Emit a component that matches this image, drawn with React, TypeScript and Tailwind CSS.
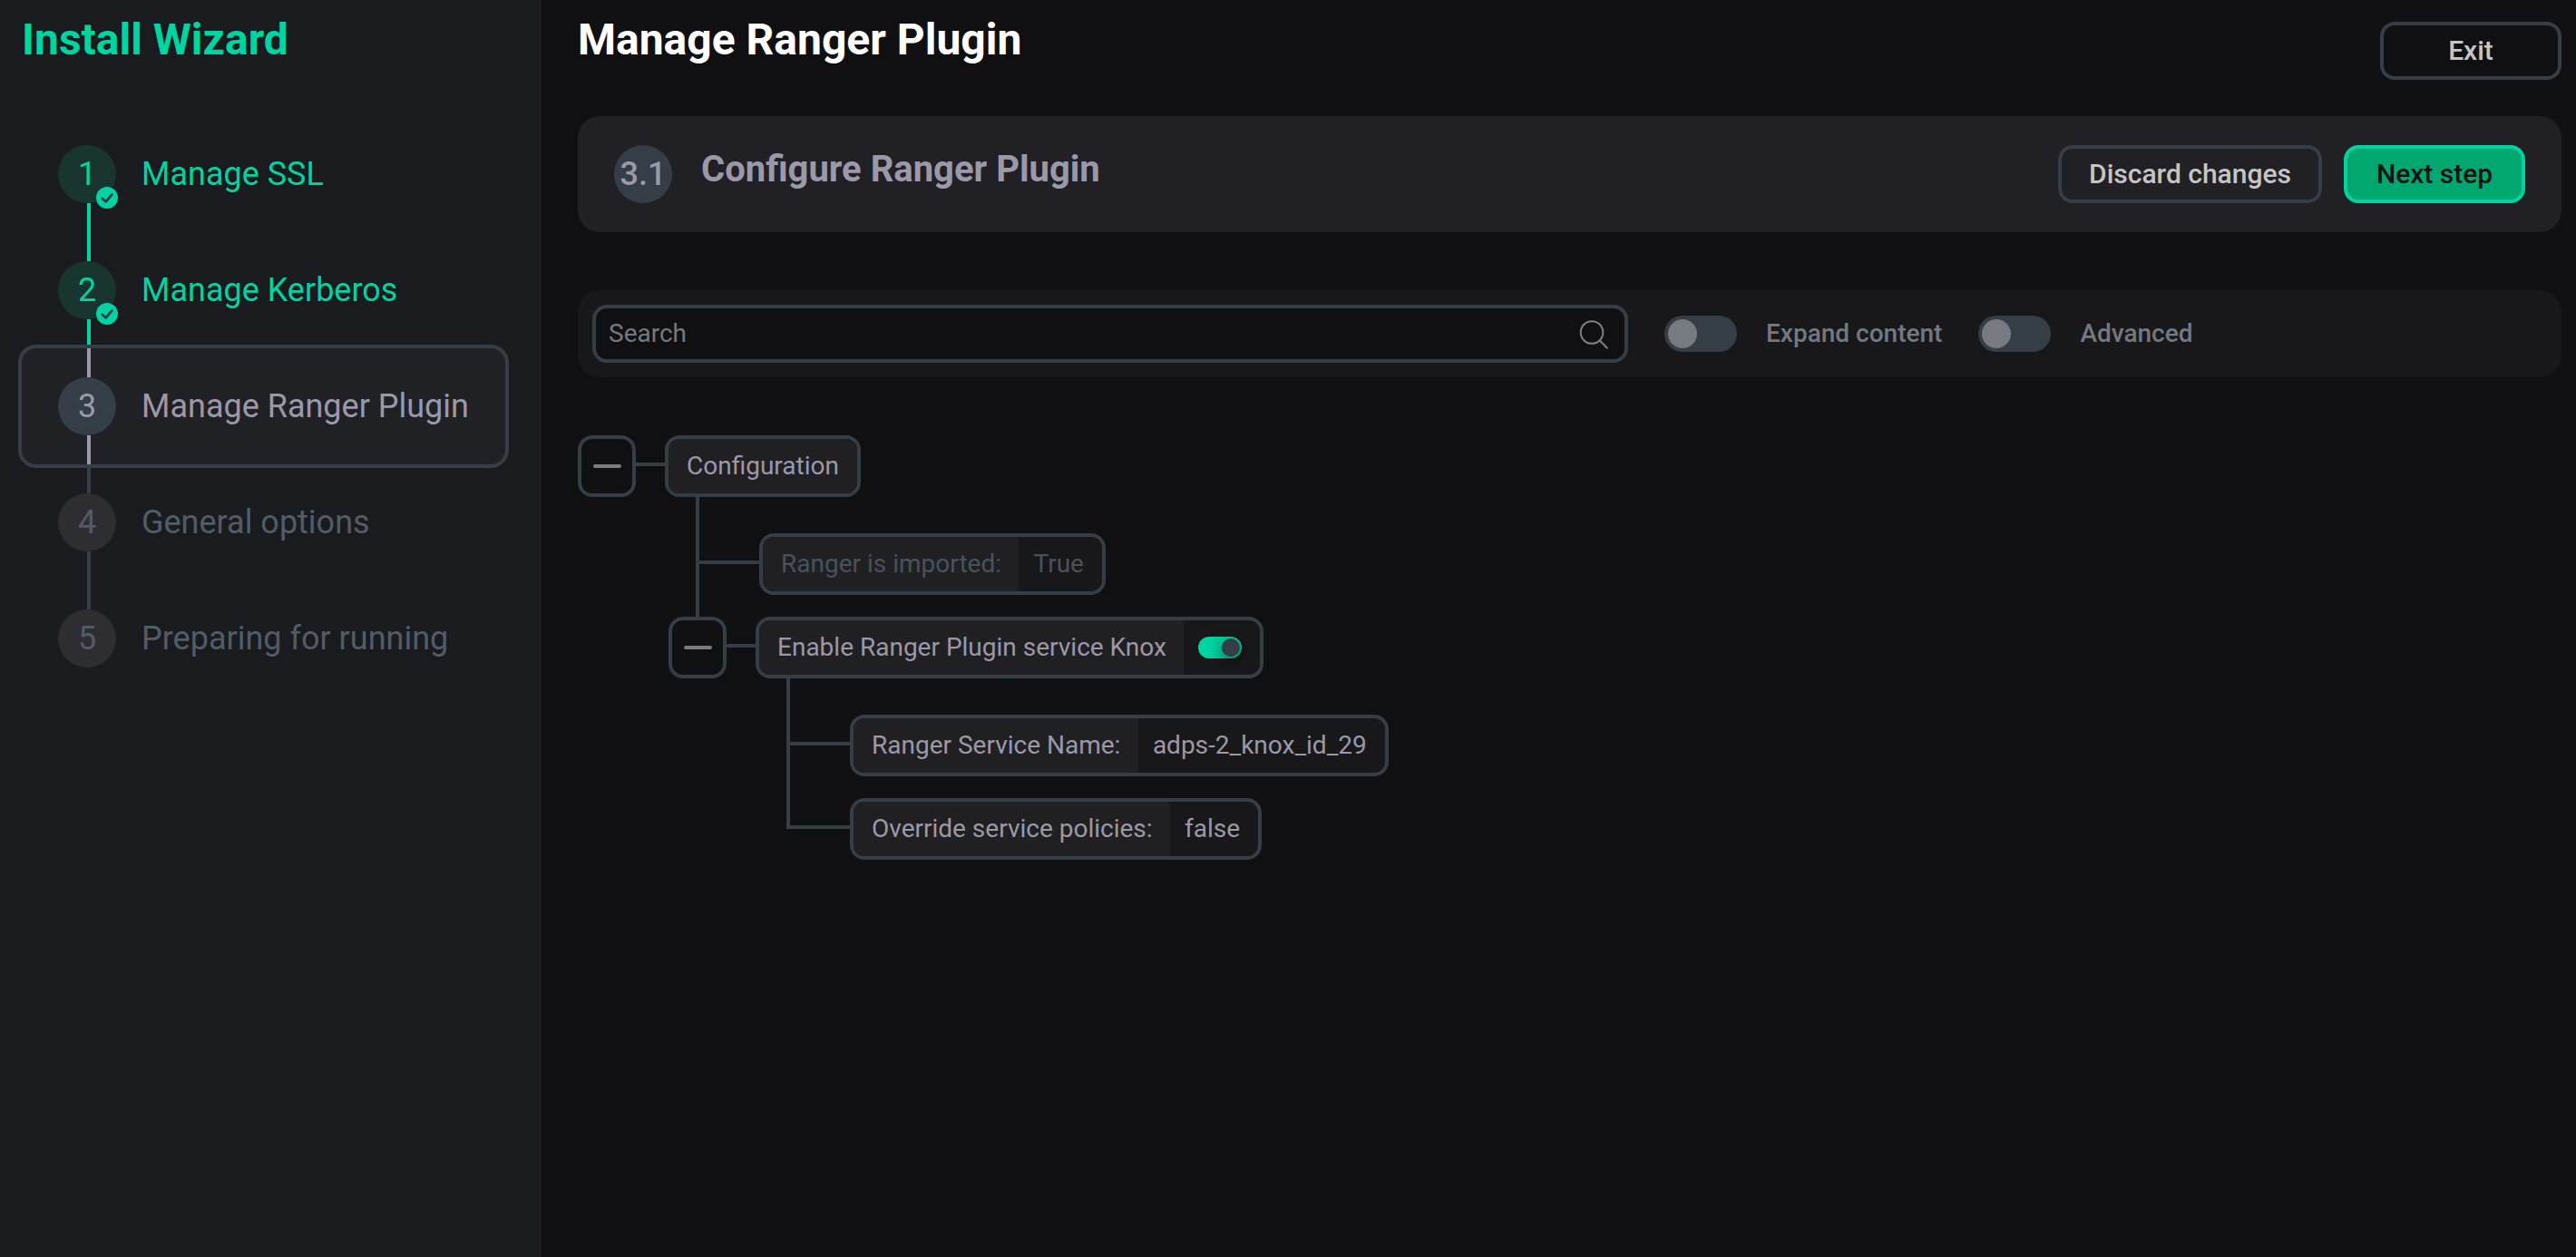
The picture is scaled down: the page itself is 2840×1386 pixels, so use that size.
import type { ReactNode } from "react";
import { clsx } from "clsx";

type StepStatus = "done" | "active" | "pending";

const steps: { title: string; status: StepStatus }[] = [
  { title: "Manage SSL", status: "done" },
  { title: "Manage Kerberos", status: "done" },
  { title: "Manage Ranger Plugin", status: "active" },
  { title: "General options", status: "pending" },
  { title: "Preparing for running", status: "pending" },
];

const lineColor = {
  done: "bg-[#00d4a0]",
  active: "bg-[#9b99a9]",
  pending: "bg-[#353d47]",
};

const circleColor = {
  done: "bg-[#19352f]",
  active: "bg-[#353d47]",
  pending: "bg-[#2e2d32]",
};

const textColor = {
  done: "text-[#00d4a0]",
  active: "text-[#9b99a9]",
  pending: "text-[#525c67]",
};

function Step({ index, title, status }: { index: number; title: string; status: StepStatus }) {
  const isFirst = index === 0;
  const isLast = index === steps.length - 1;

  return (
    <li
      className={clsx(
        "flex items-center border-4 rounded-[20px] pl-10 gap-7 text-4xl/[42px]",
        textColor[status],
        status === "active" ? "relative -my-1 border-[#353d47] bg-[#202125]" : "border-y-0 border-transparent"
      )}
    >
      <div className="flex flex-col w-16">
        <span className={clsx("w-1 h-8 ml-8", !isFirst && lineColor[status])} />
        <span className={clsx("relative flex items-center justify-center size-16 rounded-full", circleColor[status])}>
          {index + 1}
          {status === "done" && (
            <svg className="absolute left-[42px] top-[46px] size-6" viewBox="0 0 24 24" fill="none">
              <circle cx="12" cy="12" r="12" fill="#00d4a0" />
              <path d="M6.6 12.8l4.2 3.6L17.4 8.4" stroke="#353d47" strokeWidth="2.8" strokeLinecap="round" strokeLinejoin="round" />
            </svg>
          )}
        </span>
        <span className={clsx("w-1 h-8 ml-8", !isLast && lineColor[status])} />
      </div>
      <span>{title}</span>
    </li>
  );
}

function Button({ children, primary }: { children: ReactNode; primary?: boolean }) {
  return (
    <button
      className={clsx(
        "flex items-center justify-center h-16 min-w-[200px] px-[30px] pb-0.5 border-4 rounded-2xl text-[30px] font-medium whitespace-nowrap",
        primary ? "bg-[#00a870] border-[#00d4a0] text-[#111214]" : "border-[#353d47] text-[#c5c5c5]"
      )}
    >
      {children}
    </button>
  );
}

function Switch({ label }: { label: string }) {
  return (
    <label className="flex items-center gap-8 text-[28px] font-medium text-[#737980]">
      <span className="flex items-center w-20 h-10 p-1 rounded-full bg-[#353d47]">
        <span className="size-8 rounded-full bg-[#777a81]" />
      </span>
      {label}
    </label>
  );
}

function NodeBox({ label, value, disabled }: { label: string; value?: ReactNode; disabled?: boolean }) {
  return (
    <div
      className={clsx(
        "flex h-[68px] border-4 border-[#353d47] rounded-2xl overflow-hidden bg-[#18181a] text-[28px] whitespace-nowrap",
        disabled ? "text-[#49525c]" : "text-[#9b99a9]"
      )}
    >
      <span className={clsx("flex items-center pl-5 bg-[#202022]", value ? "pr-[19.5px]" : "pr-5")}>{label}</span>
      {value && <span className="flex items-center pl-4 pr-5">{value}</span>}
    </div>
  );
}

function Branch({ label, value, children }: { label: string; value?: ReactNode; children: ReactNode }) {
  return (
    <div>
      <div className="flex">
        <button className="flex items-center justify-center w-16 h-[68px] border-4 border-[#353d47] rounded-2xl">
          <span className="w-[31px] h-1 rounded-full bg-[#7a7c82]" />
        </button>
        <span className="w-8 h-1 mt-[30px] bg-[#353d47]" />
        <NodeBox label={label} value={value} />
      </div>
      {children}
    </div>
  );
}

function Leaf({ first, last, ...box }: { label: string; value: ReactNode; disabled?: boolean; first?: boolean; last?: boolean }) {
  return (
    <div className="flex ml-[130px]">
      <span className={clsx("w-1 bg-[#353d47]", last && "h-[34px]")} />
      <span className={clsx("w-[66px] h-1 bg-[#353d47]", first ? "mt-[70px]" : "mt-[30px]")} />
      <div className={clsx(first && "pt-10", !last && "pb-6")}>
        <NodeBox {...box} />
      </div>
    </div>
  );
}

export default function App() {
  return (
    <div className="flex h-screen bg-[#101012] font-[Roboto,sans-serif] overflow-hidden">
      {/* Sidebar */}
      <aside className="w-[597px] shrink-0 bg-[#1a1b1e] pl-5 pr-9 pt-4">
        <h1 className="h-28 pl-1 text-5xl/[56px] font-bold text-[#00d4a0]">Install Wizard</h1>
        <ul>
          {steps.map((step, index) => (
            <Step key={step.title} index={index} {...step} />
          ))}
        </ul>
      </aside>

      <main className="flex-1 pl-10 pr-4">
        {/* Header */}
        <div className="flex justify-between h-32">
          <h2 className="pt-4 text-5xl/[56px] font-bold text-white">Manage Ranger Plugin</h2>
          <div className="pt-6">
            <Button>Exit</Button>
          </div>
        </div>

        <section className="flex items-center h-32 px-10 rounded-3xl bg-[#212024]">
          <span className="flex items-center justify-center size-16 rounded-full bg-[#353d47] text-4xl font-medium text-[#9b99a9]">
            3.1
          </span>
          <h3 className="ml-8 pb-[11px] text-[40px]/[48px] font-bold text-[#9b99a9]">Configure Ranger Plugin</h3>
          <div className="flex gap-6 ml-auto">
            <Button>Discard changes</Button>
            <Button primary>Next step</Button>
          </div>
        </section>

        {/* Filters */}
        <section className="flex items-center gap-10 h-24 mt-16 px-4 rounded-3xl bg-[#18181a]">
          <div className="flex items-center justify-between w-[1142px] h-16 pl-3.5 pr-4 border-4 border-[#353d47] rounded-2xl bg-[#101012] text-[28px] text-[#737980]">
            Search
            <svg className="size-9" viewBox="0 0 36 36" fill="none" stroke="#7e8087" strokeWidth="2" strokeLinecap="round">
              <circle cx="16" cy="16.5" r="12.3" />
              <path d="M24.8 25.5l8 8.3" />
            </svg>
          </div>
          <Switch label="Expand content" />
          <Switch label="Advanced" />
        </section>

        {/* Configuration tree */}
        <section className="pt-16">
          <Branch label="Configuration">
            <Leaf first disabled label="Ranger is imported:" value="True" />
            <div className="ml-[100px]">
              <Branch
                label="Enable Ranger Plugin service Knox"
                value={
                  <span className="flex justify-end w-12 h-6 p-0.5 rounded-full bg-[#00d4a0]">
                    <span className="size-5 rounded-full bg-[#353d47] shadow-[0_4px_16px_rgba(0,0,0,0.6)]" />
                  </span>
                }
              >
                <Leaf first label="Ranger Service Name:" value="adps-2_knox_id_29" />
                <Leaf last label="Override service policies:" value="false" />
              </Branch>
            </div>
          </Branch>
        </section>
      </main>
    </div>
  );
}
